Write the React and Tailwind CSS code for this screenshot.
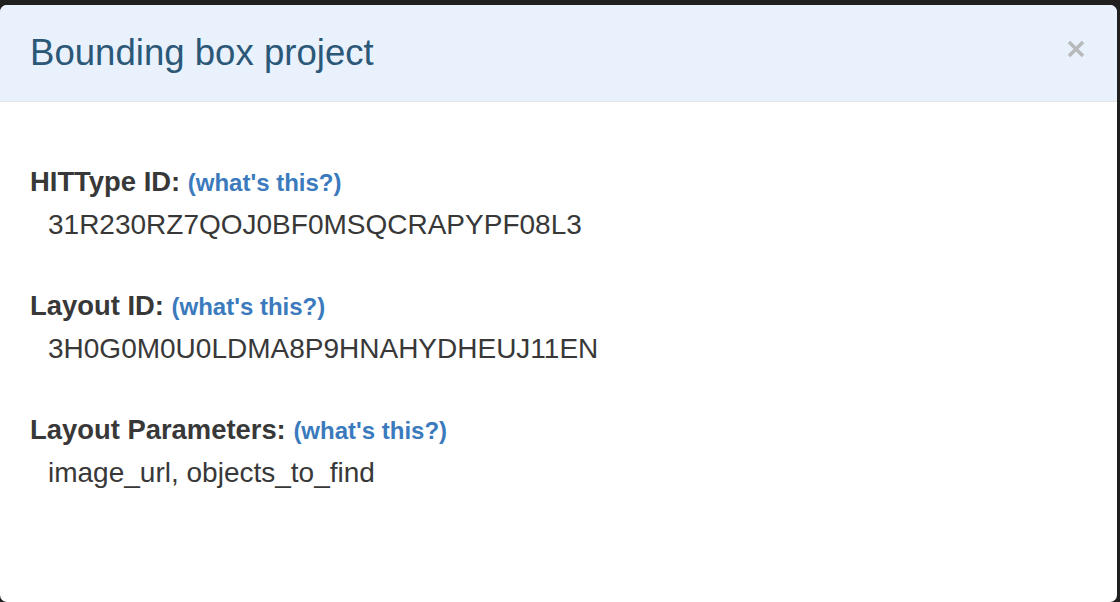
import React from 'react';

const fields = [
  { label: 'HITType ID:', value: '31R230RZ7QOJ0BF0MSQCRAPYPF08L3' },
  { label: 'Layout ID:', value: '3H0G0M0U0LDMA8P9HNAHYDHEUJ11EN' },
  { label: 'Layout Parameters:', value: 'image_url, objects_to_find' },
];

const App = () => {
  return (
    <div
      className="w-[1120px] h-[602px] bg-[#202020] overflow-hidden pt-[5px]"
      style={{ fontFamily: '"Liberation Sans", Arial, sans-serif' }}
    >
      <div className="w-[1117px] h-[597px] bg-white rounded-[7px] overflow-hidden">
        {/* header */}
        <div className="h-[97px] bg-[#e9f1fd] border-b border-[#e5e5e5] flex items-center justify-between pl-[30px] pr-[32px]">
          <h2 className="text-[36.6px] leading-[40px] text-[#2c5878] font-normal">
            Bounding box project
          </h2>
          <button className="mb-[8px] text-[#b8b9bb]">
            <svg width="18" height="18" viewBox="0 0 18 18">
              <path d="M2 2 L16 16 M16 2 L2 16" stroke="currentColor" strokeWidth="3.6" />
            </svg>
          </button>
        </div>

        {/* body */}
        <div className="pt-[64px] pl-[30px] flex flex-col gap-[47px]">
          {fields.map((f) => (
            <div key={f.label}>
              <div className="text-[27.4px] leading-[32px] font-bold text-[#383838]">
                {f.label}{' '}
                <a className="text-[24px] text-[#3a7abd] font-bold">(what's this?)</a>
              </div>
              <div className="mt-[8px] pl-[18px] text-[28px] leading-[36px] text-[#383838]">
                {f.value}
              </div>
            </div>
          ))}
        </div>
      </div>
    </div>
  );
};

export default App;
